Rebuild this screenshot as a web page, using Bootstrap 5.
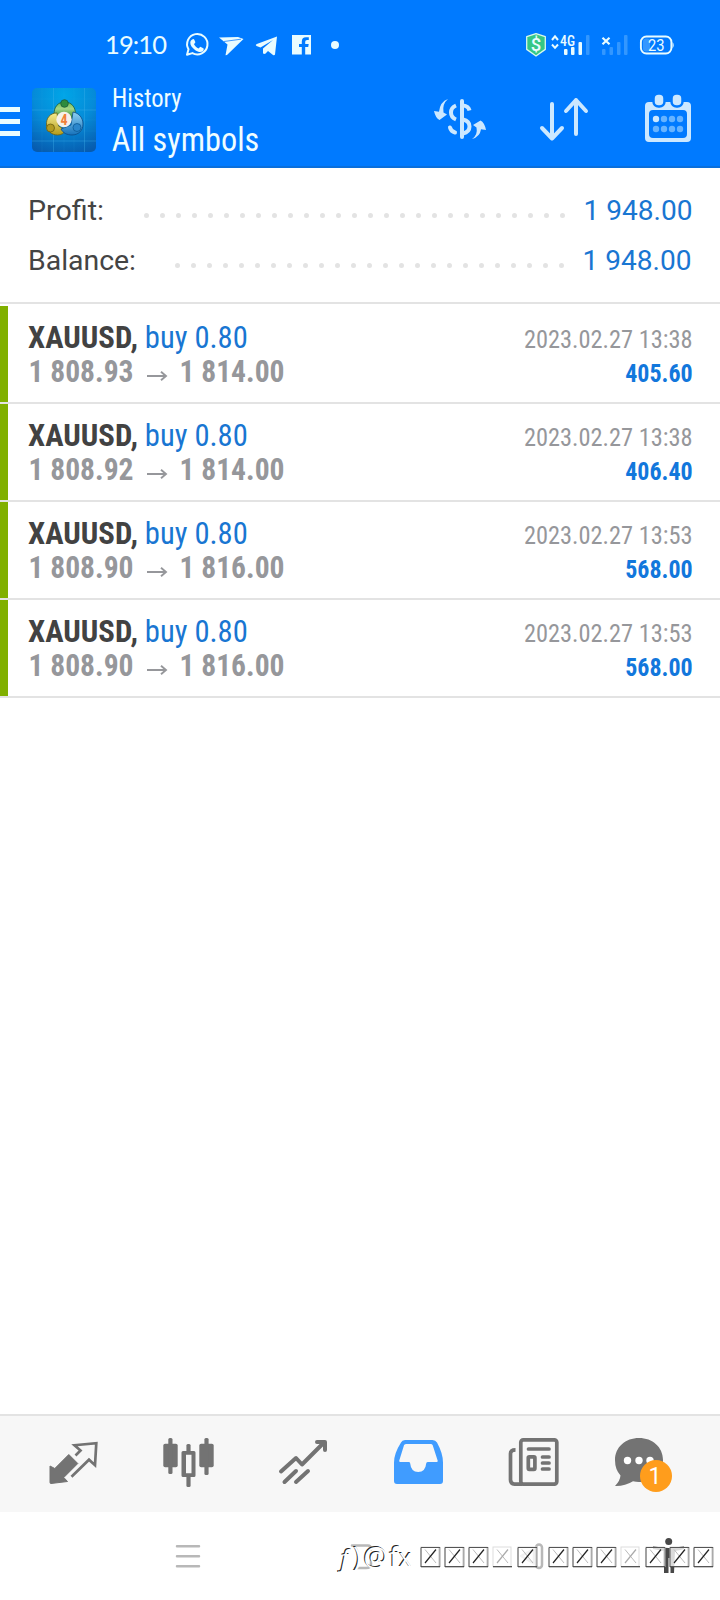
<!DOCTYPE html>
<html lang="en">
<head>
<meta charset="utf-8">
<meta name="viewport" content="width=device-width, initial-scale=1">
<title>History</title>
<link href="https://cdn.jsdelivr.net/npm/bootstrap@5.3.0/dist/css/bootstrap.min.css" rel="stylesheet">
<style>
body{width:720px;height:1600px;overflow:hidden;font-family:Roboto,"Liberation Sans",sans-serif;background:#fff}
svg{display:block;flex:none;overflow:visible}
svg text{font-family:"Roboto Condensed",Roboto,"Liberation Sans",sans-serif}
svg .wide text,svg text.wide{font-family:Roboto,"Liberation Sans",sans-serif}
svg .mark-text text{font-family:"Open Sans",sans-serif}
.topbar{background:#007aff;height:168px;border-bottom:2px solid #0a6fdb}
.status{height:76px}
.titlebar{height:90px}
.summary{height:136px;padding-top:18px;border-bottom:2px solid #e3e3e3}
.sumline{height:50px;padding:0 29px 0 28px}
.deals{padding-top:2px}
.deal{height:98px;border-bottom:2px solid #e3e3e3}
.deal .stripe{width:8px;background:#80b000}
.tabs{height:98px;background:#f7f7f7;border-top:2px solid #e3e3e3}
.sysnav{height:88px}
</style>
</head>
<body class="d-flex flex-column">
<header class="topbar flex-shrink-0">
  <div class="status d-flex justify-content-between">
    <svg width="350" height="76" viewBox="0 0 350 76" fill="#e9fcff">
      <text x="105" y="53.7" font-size="25.5" textLength="62" lengthAdjust="spacing" style="font-family:Lato,sans-serif">19:10</text>
      <path d="M187 54.700l1.500-5.400a10.200 10.200 0 1 1 3.900 3.800z" stroke-linejoin="round" fill="none" stroke="#e9fcff" stroke-width="2"/>
      <path d="M192.200 39.600c.8-.8 1.800-.7 2.200.3l1 2.400-1.400 2c1 2 2.500 3.200 4.500 4.200l1.800-1.800 3 1.500c.8.5.5 2-.4 2.800-2 1.700-4.500 1.200-7.600-.8-3.200-2.200-5.200-5-5-7.600.1-1.300.8-2.300 1.900-3z"/>
      <path d="M219 37.500l19-.5 5.500 2L227 55l-1.500.2 2-10.700z"/><path d="M224 41.500l17-2.300" stroke="#2c8cff" stroke-width=".9"/>
      <path d="M277 36.500L275 54.500q-.5 1.300-2 .5l-5-4-3 3-2-.5v-5l10-8.500-12.500 7.500-4-1.500q-1.700-1 .3-2z"/>
      <path d="M292 35h19v19.500h-5.800v-7.500h3l.5-3h-3.500v-2.200q0-1.800 1.900-1.800h1.700v-2.800h-2.800q-4.200 0-4.200 4.300v2.500h-2.800v3h2.800v7.500H292z"/>
      <circle cx="335" cy="45" r="4"/>
    </svg>
    <svg width="200" height="76" viewBox="520 0 200 76" fill="#e9fcff">
      <path d="M536 33.600l9.300 3v12.800L536 56l-9.300-6.600V36.600z" fill="#35c785" stroke="#d8f7ec" stroke-width="1.300" stroke-linejoin="round"/>
      <text class="wide" x="536" y="51.200" font-size="18.500" font-weight="500" text-anchor="middle">$</text>
      <path d="M552 40l3-3.700 3 3.700M552 44.500l3 3.300 3-3.300" fill="none" stroke="#e9fcff" stroke-width="2"/>
      <text x="560" y="46" font-size="14.500" font-weight="500" textLength="15" lengthAdjust="spacingAndGlyphs">4G</text>
      <rect x="564" y="49" width="3.500" height="6" rx="1"/><rect x="571" y="47" width="3.500" height="8" rx="1"/><rect x="578.500" y="42" width="3.500" height="13" rx="1"/>
      <g fill="#3397ff"><rect x="586" y="35" width="3.500" height="20" rx="1"/><rect x="602" y="49" width="3.500" height="6" rx="1"/><rect x="609.500" y="47" width="3.500" height="8" rx="1"/><rect x="617" y="42" width="3.500" height="13" rx="1"/><rect x="624" y="35" width="3.500" height="20" rx="1"/></g>
      <path d="M602.500 37.800l7 6.500m0-6.500l-7 6.500" stroke="#e9fcff" stroke-width="2.200"/>
      <rect x="640.900" y="36.500" width="30.500" height="17" rx="5.500" fill="none" stroke="#e9fcff" stroke-width="1.900"/><rect x="643" y="38.500" width="7" height="13" rx="3" fill="#3397ff"/><path d="M672.500 42q2.500 3 0 6.500z"/>
      <text class="wide" x="648" y="50.600" font-size="16" textLength="16.500" lengthAdjust="spacingAndGlyphs">23</text>
    </svg>
  </div>
  <div class="titlebar d-flex">
    <svg width="104" height="90" viewBox="0 76 104 90">
      <defs>
        <radialGradient id="sky" cx=".5" cy=".12" r=".95"><stop offset="0" stop-color="#00a6e8"/><stop offset=".5" stop-color="#058bd8"/><stop offset="1" stop-color="#075bae"/></radialGradient>
        <linearGradient id="gr" x2="0" y2="1"><stop stop-color="#6fbb57"/><stop offset=".4" stop-color="#a5d684"/><stop offset="1" stop-color="#1f7c32"/></linearGradient>
        <linearGradient id="ye" x2="0" y2="1"><stop stop-color="#f5ec90"/><stop offset="1" stop-color="#b49a18"/></linearGradient>
        <linearGradient id="bl" x2="0" y2="1"><stop stop-color="#8fd2f3"/><stop offset="1" stop-color="#1672bb"/></linearGradient>
      </defs>
      <path d="M0 109.500h20M0 121.500h20M0 133.500h20" stroke="#e9fcff" stroke-width="5"/>
      <rect x="32" y="88" width="64" height="64" rx="5" fill="url(#sky)"/>
      <path d="M53.500 88v64M84.500 88v64M32 110h64M32 141h64" stroke="#45b4ec" stroke-opacity=".35"/>
      <path d="M42 88v64M64 88v64M74 88v64M32 99h64M32 120h64M32 131h64" stroke="#45b4ec" stroke-opacity=".1"/>
      <g stroke-width=".8" stroke="#1b5a38">
        <path d="M64.500 102c7 0 11 5 11 12l-3 5H57l-3-5c0-7 4-12 10.500-12z" fill="url(#gr)"/><circle cx="64.500" cy="103.500" r="3.800" fill="#2e8b3c"/>
        <path d="M57 113c-7 0-11 5-10.500 12 .5 6 5 10 11 10 4 0 7-2 8-5l-7-4z" fill="url(#ye)" stroke="#6b6012"/>
        <circle cx="50.500" cy="128" r="4" fill="#b39b22" stroke="#6b6012"/>
        <path d="M73 112c6 1 10 6 10 12 0 7-5 11-11 11-5 0-9-2-11-6l10-4z" fill="url(#bl)" stroke="#0c4a86"/>
        <circle cx="77" cy="127.500" r="4" fill="#2a86cc" stroke="#0c5a96"/>
      </g>
      <circle cx="64" cy="119.500" r="7.700" fill="#f4f0ea"/>
      <text x="64" y="124.500" font-size="14" font-weight="700" fill="#f08039" text-anchor="middle">4</text>
    </svg>
    <svg class="me-auto" width="160" height="90" viewBox="104 76 160 90" fill="#effdff">
      <text x="112" y="107.300" font-size="26" textLength="69.500" lengthAdjust="spacingAndGlyphs">History</text>
      <text x="111.800" y="150.500" font-size="34" textLength="147.500" lengthAdjust="spacingAndGlyphs">All symbols</text>
    </svg>
    <svg width="300" height="90" viewBox="420 76 300 90" fill="none" stroke="#cce8ff" stroke-linecap="round" stroke-linejoin="round">
      <g stroke-width="4">
        <path d="M462 101v36"/>
        <path d="M456 105.500q-5 2-5 7t5 7M463 105.500q5.500.5 6.500 5" stroke-linecap="butt"/>
        <path d="M450 127.500q1 4 5 5M463 119.500q6.500 1.500 6.500 7t-6.500 7"/>
      </g>
      <path d="M448 99q-6 5-4.500 13.500l3.500 2-7.500 5.500q-4-2-5.500-9l5 .8q1-10 9-12.800zM472 139q6-4 4.500-11.500l-3.500-2.500 7.500-4.500q4 2 5.500 9.500l-5-.8q-1 7.500-9 9.800z" fill="#cce8ff" stroke="none"/>
      <path d="M552 104v34M542 128l10 10.500 10-10.500M576 134v-34M566 111l10-11 10 11" stroke-width="4"/>
      <path fill="#cce8ff" stroke="none" fill-rule="evenodd" d="M649 102h38q4 0 4 4v32q0 4-4 4h-38q-4 0-4-4v-32q0-4 4-4zm4 8q-4 0-4 4v20q0 4 4 4h30q4 0 4-4v-20q0-4-4-4z"/>
      <rect x="653.500" y="93.500" width="11" height="13" rx="5" fill="#cce8ff" stroke="#007aff" stroke-width="2.500"/><rect x="671.500" y="93.500" width="11" height="13" rx="5" fill="#cce8ff" stroke="#007aff" stroke-width="2.500"/>
      <g stroke="none" fill="#66b3ff"><circle cx="656" cy="119" r="3.200" fill="#cce8ff"/><circle cx="664" cy="119" r="3.200"/><circle cx="672" cy="119" r="3.200"/><circle cx="680" cy="119" r="3.200"/><circle cx="656" cy="129" r="3.200"/><circle cx="664" cy="129" r="3.200"/><circle cx="672" cy="129" r="3.200"/><circle cx="680" cy="129" r="3.200"/></g>
    </svg>
  </div>
</header>

<section class="summary flex-shrink-0">
  <div class="sumline d-flex justify-content-between">
    <svg width="110" height="50" fill="#444"><text class="wide" x="0" y="34" font-size="28" textLength="76" lengthAdjust="spacingAndGlyphs">Profit:</text></svg>
    <svg class="ms-auto" width="446" height="50"><path d="M8.500 29.500H426" stroke="#e3e3e3" stroke-width="5" stroke-linecap="round" stroke-dasharray="0 16"/></svg>
    <svg width="108" height="50" fill="#1976d2"><text class="wide" x="-.5" y="34" font-size="28" textLength="109" lengthAdjust="spacingAndGlyphs">1 948.00</text></svg>
  </div>
  <div class="sumline d-flex justify-content-between">
    <svg width="110" height="50" fill="#444"><text class="wide" x="0" y="34" font-size="28" textLength="108" lengthAdjust="spacingAndGlyphs">Balance:</text></svg>
    <svg class="ms-auto" width="414" height="50"><path d="M8.500 29.500H394" stroke="#e3e3e3" stroke-width="5" stroke-linecap="round" stroke-dasharray="0 16"/></svg>
    <svg width="108" height="50" fill="#1976d2"><text class="wide" x="-.5" y="34" font-size="28" textLength="109" lengthAdjust="spacingAndGlyphs">1 948.00</text></svg>
  </div>
</section>

<main class="deals flex-grow-1" id="deals"></main>

<nav class="tabs flex-shrink-0">
  <svg width="720" height="96" viewBox="0 1416 720 96" fill="#737373" stroke="#737373">
    <g>
      <path d="M50 1466v16.500q0 1 1 1l16.500-2-3.700-4 14-14-9-9-14 14z" stroke-width="1" stroke-linejoin="round"/>
      <path d="M75.500 1455.500l5-5-6-5.300 21.800-2-1.300 22-6-5.500-17.500 17" fill="none" stroke-width="2.700"/>
    </g>
    <g stroke="none">
      <rect x="163.300" y="1443.800" width="14.400" height="23.400" rx="1.800"/><rect x="199.300" y="1443.800" width="14.400" height="23.400" rx="1.800"/>
      <rect x="168.300" y="1438" width="4.200" height="36" rx="1.500"/><rect x="204.400" y="1438" width="4.200" height="37" rx="1.500"/>
      <path d="M183 1451h11q1.500 0 1.500 1.500v23q0 1.500-1.500 1.500h-11q-1.500 0-1.500-1.500v-23q0-1.500 1.500-1.500zm3 3.700v18.500h5.500v-18.500z" fill-rule="evenodd"/>
      <rect x="186.400" y="1444" width="4.200" height="9" rx="1.500"/><rect x="186.400" y="1475" width="4.200" height="12" rx="1.500"/>
    </g>
    <g fill="none" stroke-width="4" stroke-linecap="round" stroke-linejoin="round"><path d="M281 1471.500l15-13.500 6 6.500 22-22M284.500 1482l11.500-11M296 1482l12-11"/><path d="M317 1442h8v8" /></g>
    <path stroke="none" fill="#409cff" fill-rule="evenodd" d="M405 1440h27.500q3 0 4.500 2.500 6 11 6 20v18.500q0 3-3 3h-43q-3 0-3-3v-18.500q0-9 7-20 1-2.500 4-2.500zm1.500 4q-2 0-2.500 1.200l-4.800 15.500q-.2 1.300 1.300 1.300h8.500q1.200 0 1.200 1.500.8 8.500 8 8.500t8-8.500q0-1.500 1.500-1.500h8.800q1.500 0 1.200-1.300l-5-15.500q-.5-1.200-2-1.200z"/>
    <g fill="none" stroke-width="3.700" stroke-linecap="round">
      <rect x="520.800" y="1439.800" width="36" height="44.300" rx="2.500"/><path d="M515.500 1449.800q-5 0-5 4v26q0 4.300 4 4.300h8" stroke-linecap="butt"/>
      <path d="M528.500 1449h20.500M542.500 1457h6.500M542.500 1463h6.500M542.500 1469h6.500"/><rect x="528.300" y="1456.800" width="6.600" height="12.500" rx="1"/>
    </g>
    <path stroke="none" d="M639 1438c13.500 0 24 9 24 22s-10.500 22-24 22q-3 0-6-.7-8 5-18 4.700 5-5 5.500-10.500-5.500-6-5.500-15.500c0-13 10.500-22 24-22z"/>
    <g fill="#fff" stroke="none"><circle cx="627.500" cy="1460.500" r="3.700"/><circle cx="639" cy="1460.500" r="3.700"/><circle cx="650" cy="1460.500" r="3.700"/></g>
    <circle cx="656" cy="1476" r="16" fill="#ff9d1c" stroke="none"/>
    <text class="wide" x="655" y="1484" text-anchor="middle" font-size="23" fill="#fff" stroke="none">1</text>
  </svg>
</nav>
<footer class="sysnav flex-shrink-0">
  <svg width="720" height="88" viewBox="0 1512 720 88" fill="none">
    <g stroke="#b8b8b8" stroke-width="2.500" stroke-linecap="round"><path d="M177 1546.300h22M177 1556.300h22M177 1566.300h22"/>
      <path d="M352 1545.500h16q3 0 3 4M355 1568h11q5 0 5-4v-10"/>
      <rect x="536" y="1544.500" width="6" height="23.500" rx="3"/><path d="M534 1549l-13 7 13 7.500z" stroke-linejoin="round"/></g>
    <g fill="#484848"><circle cx="668.700" cy="1541.500" r="3.500"/><path d="M653 1546q16 4 31 0v3q-5 1.500-9 2l-1 22h-3.500v-15h-2v15H664v-22l-11-2z"/></g>
    <g class="mark-text" id="handle"></g>
    <g id="boxes"></g>
  </svg>
</footer>
<script src="https://cdn.jsdelivr.net/npm/bootstrap@5.3.0/dist/js/bootstrap.bundle.min.js"></script>
<script>
const deals=[["1 808.93","1 814.00","13:38","405.60"],["1 808.92","1 814.00","13:38","406.40"],["1 808.90","1 816.00","13:53","568.00"],["1 808.90","1 816.00","13:53","568.00"]];
const t=(x,y,s,w,c,str,b)=>`<text x="${x}" y="${y}" font-size="${s}" textLength="${w}" lengthAdjust="spacingAndGlyphs" fill="${c}" font-weight="${b?700:400}">${str}</text>`;
document.getElementById('deals').innerHTML=deals.map(d=>`<article class="deal d-flex"><div class="stripe"></div>
<svg width="300" height="96" viewBox="8 0 300 96">${t(28,42,32,110,'#424242','XAUUSD,',1)}${t(144.800,42,32,103,'#1976d2','buy 0.80')}${t(28.500,75.700,32,105,'#96979b',d[0],1)}<path d="M147 70h18M161 65.700l5 4.300-5 4.300" fill="none" stroke="#96979b" stroke-width="1.900"/>${t(179.500,75.700,32,105,'#96979b',d[1],1)}</svg>
<svg class="ms-auto" width="212" height="96" viewBox="508 0 212 96">${t(524,41.700,26.500,168.500,'#96979b','2023.02.27 '+d[2])}${t(625.200,75.900,26.500,67.500,'#1277dc',d[3],1)}</svg></article>`).join('');
/* embossed account handle: dark copy underneath, white copy shifted over it */
const glyphs=[['f',340,1,24],[')',352,0,28],['@',362.5,0,27],['f',388.5,0,27],['x',398,0,25]];
const copy=(d,c)=>glyphs.map(([g,x,i,s])=>`<text x="${x+d}" y="${1566+d}" font-size="${s}" fill="${c}"${i?' font-style="italic"':''}>${g}</text>`).join('');
document.getElementById('handle').innerHTML=copy(0,'#222')+copy(1,'#fff');
document.getElementById('boxes').innerHTML=[421,445,469,493,518,549,573,597,621,646,670,694].map(x=>{
const soft=x===493||x===621;
return `<rect x="${x}" y="1547" width="18" height="19.500" fill="#fff" fill-opacity=".8" stroke="#ddd" stroke-width="1"/>`+(soft?'':`<path d="M${x+18.700} 1547v20" stroke="#aaa" stroke-width="1.700"/><path d="M${x} 1567v-19.500h19" stroke="#555"/>`)+`<path d="M${x} 1566.700h19" stroke="#444" stroke-width="1.200"/><path d="M${x+4} 1549.500l11 13.500" stroke="#bbb"/><path d="M${x+15} 1549.500l-11 13.500" stroke="${soft?'#aaa':'#222'}" stroke-width="1.200"/>`}).join('');
</script>
</body>
</html>
